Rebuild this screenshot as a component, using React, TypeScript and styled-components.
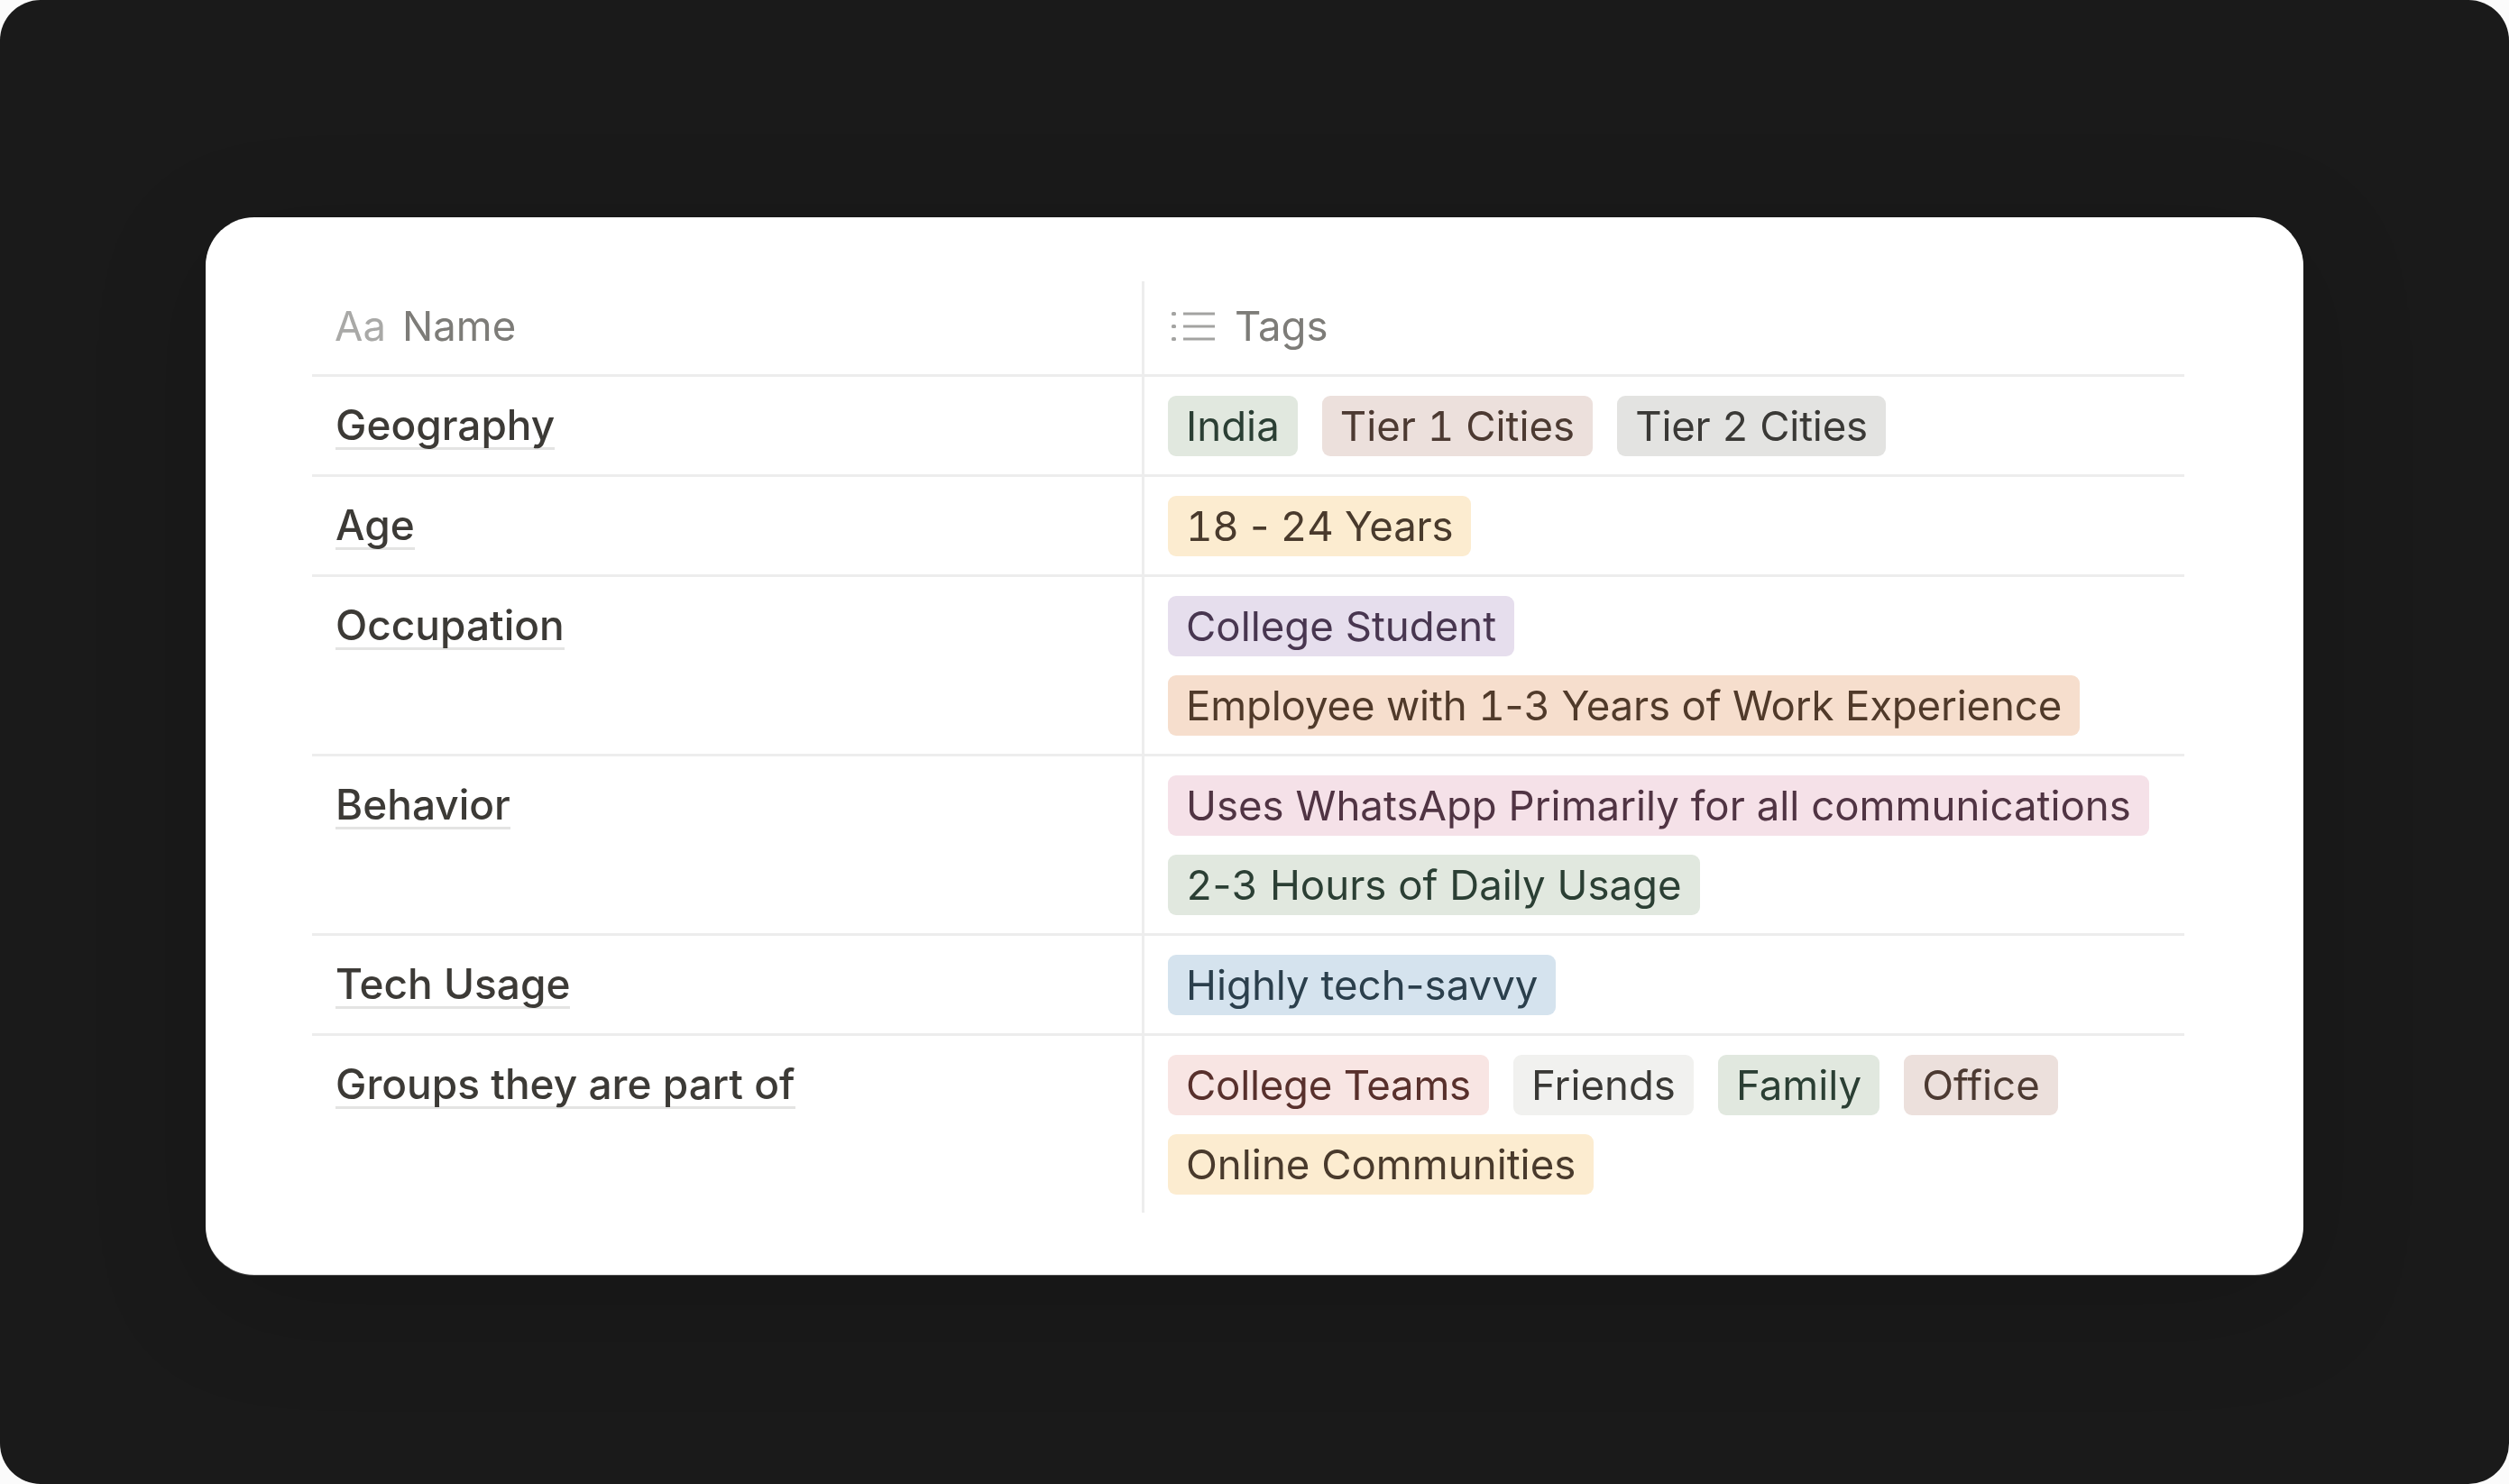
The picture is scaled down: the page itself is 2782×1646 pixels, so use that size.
import styled, { createGlobalStyle } from "styled-components";

const GlobalStyle = createGlobalStyle`
  html, body {
    margin: 0;
    background: #fbfbfb;
  }
`;

const tones = {
  green: { bg: "#e1e8df", fg: "#2b3f34" },
  brown: { bg: "#ece0dc", fg: "#4c3a32" },
  gray: { bg: "#e3e3e1", fg: "#3a3936" },
  yellow: { bg: "#fcecd0", fg: "#493a2c" },
  purple: { bg: "#e6deed", fg: "#483650" },
  orange: { bg: "#f6decd", fg: "#503a2a" },
  pink: { bg: "#f5e1e8", fg: "#503443" },
  blue: { bg: "#d5e3ee", fg: "#2b3f4c" },
  red: { bg: "#f8e5e3", fg: "#58302c" },
  light: { bg: "#f1f1ef", fg: "#3a3936" },
};

type Tone = keyof typeof tones;

const Frame = styled.div`
  box-sizing: border-box;
  width: 2782px;
  height: 1646px;
  padding: 241px 228px 232px;
  background: #1a1a1a;
  border-radius: 45px;
  overflow: hidden;
`;

const Card = styled.div`
  box-sizing: border-box;
  height: 100%;
  padding: 71px 132px 71px 118px;
  background: #ffffff;
  border-radius: 54px;
  box-shadow: 0 1px 0 rgba(120, 120, 120, 0.6), 0 30px 130px rgba(0, 0, 0, 0.16);
  font-family: Inter, "Liberation Sans", sans-serif;
`;

const Table = styled.div`
  filter: blur(0.6px);
`;

const Row = styled.div<{ $last?: boolean }>`
  display: grid;
  grid-template-columns: 920px 1fr;
  border-bottom: ${(p) => (p.$last ? "none" : "3px solid #ededed")};
`;

const HeaderRow = styled(Row)`
  height: 106px;
  box-sizing: border-box;
`;

const HeadCell = styled.div`
  display: flex;
  align-items: center;
  padding: 0 0 4px 25px;
  font-size: 45.5px;
  color: #7d7c78;
`;

const TagsHead = styled(HeadCell)`
  border-left: 3px solid #ededed;
  padding-left: 29px;
  gap: 21px;
`;

const TypeGlyph = styled.span`
  color: #a9a9a7;
  margin-right: 18px;
`;

const LabelCell = styled.div`
  padding: 20px 0 0 26px;
`;

const Label = styled.span`
  display: inline-block;
  height: 58px;
  line-height: 66px;
  font-size: 46px;
  font-weight: 500;
  color: #3c3a36;
  border-bottom: 3px solid #e4e4e3;
`;

const TagCell = styled.div`
  display: flex;
  flex-wrap: wrap;
  align-content: flex-start;
  gap: 21px 27px;
  padding: 21px 0 20px 26px;
  border-left: 3px solid #ededed;
`;

const Tag = styled.span<{ $tone: Tone; $track?: number }>`
  box-sizing: border-box;
  height: 67px;
  line-height: 67px;
  padding: 0 20px;
  border-radius: 9px;
  font-size: 45.6px;
  letter-spacing: ${(p) => p.$track ?? 0}px;
  white-space: nowrap;
  background: ${(p) => tones[p.$tone].bg};
  color: ${(p) => tones[p.$tone].fg};
`;

const Digits = styled.span`
  font-feature-settings: "tnum";
`;

const rows: { label: string; tags: [string, Tone, number?][] }[] = [
  {
    label: "Geography",
    tags: [
      ["India", "green"],
      ["Tier 1 Cities", "brown"],
      ["Tier 2 Cities", "gray", -0.2],
    ],
  },
  { label: "Age", tags: [["18 - 24 Years", "yellow", -0.2]] },
  {
    label: "Occupation",
    tags: [
      ["College Student", "purple"],
      ["Employee with 1-3 Years of Work Experience", "orange", -0.17],
    ],
  },
  {
    label: "Behavior",
    tags: [
      ["Uses WhatsApp Primarily for all communications", "pink"],
      ["2-3 Hours of Daily Usage", "green"],
    ],
  },
  { label: "Tech Usage", tags: [["Highly tech-savvy", "blue"]] },
  {
    label: "Groups they are part of",
    tags: [
      ["College Teams", "red", -0.25],
      ["Friends", "light"],
      ["Family", "green"],
      ["Office", "brown"],
      ["Online Communities", "yellow"],
    ],
  },
];

function ListIcon() {
  return (
    <svg width="50" height="36" viewBox="0 0 50 36" fill="#a3a3a1">
      <rect x="1" y="2" width="5" height="4" rx="1.5" />
      <rect x="1" y="16" width="5" height="4" rx="1.5" />
      <rect x="1" y="30" width="5" height="4" rx="1.5" />
      <rect x="14" y="2.5" width="35" height="3" />
      <rect x="14" y="16.5" width="35" height="3" />
      <rect x="14" y="30.5" width="35" height="3" />
    </svg>
  );
}

// digits in the original are fixed-width, hyphens are not
function tagText(text: string) {
  return text
    .split(/(\d+)/)
    .map((part, i) => (/\d/.test(part) ? <Digits key={i}>{part}</Digits> : part));
}

export default function App() {
  return (
    <Frame>
      <GlobalStyle />
      <Card>
        <Table>
          <HeaderRow>
            <HeadCell>
              <TypeGlyph>Aa</TypeGlyph>
              Name
            </HeadCell>
            <TagsHead>
              <ListIcon />
              Tags
            </TagsHead>
          </HeaderRow>
          {rows.map((row, i) => (
            <Row key={row.label} $last={i === rows.length - 1}>
              <LabelCell>
                <Label>{row.label}</Label>
              </LabelCell>
              <TagCell>
                {row.tags.map(([text, tone, track]) => (
                  <Tag key={text} $tone={tone} $track={track}>
                    {tagText(text)}
                  </Tag>
                ))}
              </TagCell>
            </Row>
          ))}
        </Table>
      </Card>
    </Frame>
  );
}
